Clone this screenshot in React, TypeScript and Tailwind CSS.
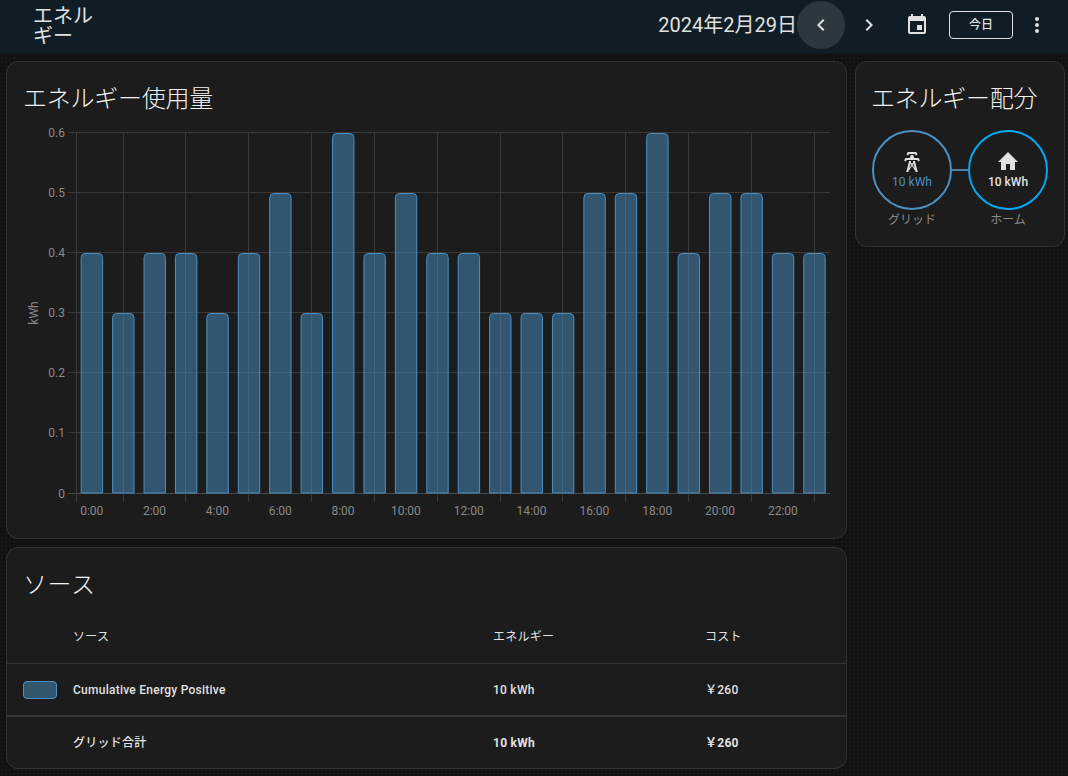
const fontStack = "font-['Roboto','Noto_Sans_CJK_JP',sans-serif]";

const usage = [0.4, 0.3, 0.4, 0.4, 0.3, 0.4, 0.5, 0.3, 0.6, 0.4, 0.5, 0.4, 0.4, 0.3, 0.3, 0.3, 0.5, 0.5, 0.6, 0.4, 0.5, 0.5, 0.4, 0.4];

const plot = { left: 76, right: 830, top: 132.5, bottom: 493 };
const band = (plot.right - plot.left) / 24;
// snapped to the pixel grid so the grid lines stay one pixel wide
const yFor = (v: number) => Math.floor(plot.bottom - (v / 0.6) * (plot.bottom - plot.top)) + 0.5;

const cost = "\uFFE5260";

const icons = {
  left: "M15.41,16.58L10.83,12L15.41,7.41L14,6L8,12L14,18L15.41,16.58Z",
  right: "M8.59,16.58L13.17,12L8.59,7.41L10,6L16,12L10,18L8.59,16.58Z",
  calendar: "M19 19H5V8H19M16 1V3H8V1H6V3H5C3.89 3 3 3.89 3 5V19A2 2 0 0 0 5 21H19A2 2 0 0 0 21 19V5C21 3.89 20.1 3 19 3H18V1M17 12H12V17H17V12Z",
  dots: "M12,16A2,2 0 0,1 14,18A2,2 0 0,1 12,20A2,2 0 0,1 10,18A2,2 0 0,1 12,16M12,10A2,2 0 0,1 14,12A2,2 0 0,1 12,14A2,2 0 0,1 10,12A2,2 0 0,1 12,10M12,4A2,2 0 0,1 14,6A2,2 0 0,1 12,8A2,2 0 0,1 10,6A2,2 0 0,1 12,4Z",
  tower: "M8.28,5.45L6.5,4.55L7.76,2H16.23L17.5,4.55L15.72,5.45L15,4H9L8.28,5.45M18.62,8H14.09L13.3,5H10.7L9.91,8H5.38L4.1,10.55L5.89,11.44L6.62,10H17.38L18.1,11.44L19.89,10.55L18.62,8M17.77,22H15.7L15.46,21.1L12,15.9L8.53,21.1L8.3,22H6.23L9.12,11H11.19L10.83,12.35L12,14.1L13.16,12.35L12.81,11H14.88L17.77,22M11.4,15L10.5,13.65L9.32,18.13L11.4,15M14.68,18.13L13.5,13.65L12.6,15L14.68,18.13Z",
  home: "M10,20V14H14V20H19V12H22L12,2L2,12H5V20H10Z",
};

function Icon({ d, className }: { d: string; className?: string }) {
  return (
    <svg viewBox="0 0 24 24" className={className} fill="currentColor">
      <path d={d} />
    </svg>
  );
}

function UsageChart() {
  const vLines = Array.from({ length: 12 }, (_, i) => Math.floor(plot.left + band * (1.5 + i * 2)) + 0.5);
  const yTicks = [0, 0.1, 0.2, 0.3, 0.4, 0.5, 0.6];

  return (
    <svg viewBox="7 115 839 423" className="block h-[423px] w-[839px]">
      {yTicks.map((t) => (
        <g key={t}>
          <line x1={68} x2={plot.right} y1={yFor(t)} y2={yFor(t)} stroke={t === 0 ? "#4a4a4a" : "#383838"} />
          <text x={65} y={yFor(t) + 4} textAnchor="end" fontSize={12} fill="#8a8a8a">
            {t}
          </text>
        </g>
      ))}
      <line x1={76.5} x2={76.5} y1={plot.top} y2={plot.bottom + 9} stroke="#3d3d3d" />
      {vLines.map((x) => (
        <line key={x} x1={x} x2={x} y1={plot.top} y2={plot.bottom + 9} stroke="#383838" />
      ))}
      {usage.map((v, i) => {
        const x = plot.left + band * i + 5.2;
        const w = 21.4;
        const y = yFor(v) + 1;
        return (
          <path
            key={i}
            d={`M${x} ${plot.bottom}V${y + 4}a4 4 0 0 1 4 -4H${x + w - 4}a4 4 0 0 1 4 4V${plot.bottom}Z`}
            fill="#4a90c4"
            fillOpacity={0.5}
            stroke="#4a90c4"
            strokeWidth={1}
          />
        );
      })}
      {usage.map((_, i) =>
        i % 2 === 0 ? (
          <text key={i} x={plot.left + band * (i + 0.5)} y={515} textAnchor="middle" fontSize={12} fill="#8a8a8a">
            {i}:00
          </text>
        ) : null
      )}
      <text transform="translate(38 313) rotate(-90)" textAnchor="middle" fontSize={12} fill="#8a8a8a">
        kWh
      </text>
    </svg>
  );
}

function Card({ className, children }: { className?: string; children: React.ReactNode }) {
  return <section className={`rounded-xl border border-[#333333] bg-[#1c1c1c] ${className ?? ""}`}>{children}</section>;
}

function CardTitle({ className, children }: { className?: string; children: React.ReactNode }) {
  return <h2 className={`px-4 pt-[21px] text-2xl leading-8 font-light text-[#f0f0f0] ${className ?? ""}`}>{children}</h2>;
}

function SourceRow({ name, energy, cost, swatch, bold, className }: { name: string; energy: string; cost: string; swatch?: boolean; bold?: boolean; className: string }) {
  return (
    <div className={`flex items-center text-xs font-medium tracking-[0.25px] text-[#e1e1e1] ${className}`}>
      <div className="w-[66px] pl-4">
        {swatch && <div className="h-[18px] w-[34px] rounded-[4px] border border-[#4a90c4] bg-[#33566f]" />}
      </div>
      <div className="w-[420px]">{name}</div>
      <div className={`w-[212px] ${bold ? "font-bold" : ""}`}>{energy}</div>
      <div className={bold ? "font-bold" : ""}>{cost}</div>
    </div>
  );
}

export default function App() {
  return (
    <div className={`flex h-[776px] w-[1068px] flex-col overflow-hidden bg-[#111111] bg-[radial-gradient(#181818_1px,transparent_1px)] bg-[length:4px_4px] ${fontStack}`}>
      <header className="flex h-[53px] flex-none items-center bg-[#101d24] pr-[7px] pb-[3px] text-[#e1e1e1]">
        <div className="mt-[2px] ml-[33px] w-[60px] text-xl leading-5">エネルギー</div>
        <div className="ml-auto text-xl whitespace-nowrap">2024年2月29日</div>
        <button className="flex h-12 w-12 items-center justify-center rounded-full bg-[#2b393f]">
          <Icon d={icons.left} className="h-6 w-6" />
        </button>
        <button className="flex h-12 w-12 items-center justify-center">
          <Icon d={icons.right} className="h-6 w-6" />
        </button>
        <button className="flex h-12 w-12 items-center justify-center">
          <Icon d={icons.calendar} className="h-6 w-6" />
        </button>
        <button className="ml-2 h-7 w-16 rounded border border-[#e1e1e1] text-xs font-medium">今日</button>
        <button className="flex h-12 w-12 items-center justify-center">
          <Icon d={icons.dots} className="h-6 w-6" />
        </button>
      </header>

      <main className="flex gap-2 pt-2 pl-[6px]">
        <div className="flex w-[841px] flex-col gap-2">
          <Card className="h-[478px]">
            <CardTitle className="tracking-[-0.25px]">エネルギー使用量</CardTitle>
            <UsageChart />
          </Card>
          <Card className="h-[222px]">
            <CardTitle className="tracking-[0.6px]">ソース</CardTitle>
            <div className="flex h-[62px] items-center pt-[10px] text-xs tracking-[0.25px] text-[#e1e1e1]">
              <div className="w-[66px]" />
              <div className="w-[420px]">ソース</div>
              <div className="w-[212px]">エネルギー</div>
              <div>コスト</div>
            </div>
            <SourceRow name="Cumulative Energy Positive" energy="10 kWh" cost={cost} swatch className="h-[52px] border-t border-[#333333]" />
            <SourceRow name="グリッド合計" energy="10 kWh" cost={cost} bold className="h-[53px] border-t-2 border-[#333333] pt-[1px]" />
          </Card>
        </div>

        <Card className="h-[186px] w-[210px] flex-none">
          <CardTitle className="-ml-px tracking-[-0.25px] whitespace-nowrap">エネルギー配分</CardTitle>
          <div className="mt-[15px] flex items-center px-4">
            <div className="flex h-20 w-20 flex-col items-center justify-center rounded-full border-2 border-[#4a90c4]">
              <Icon d={icons.tower} className="h-6 w-6 text-[#e1e1e1]" />
              <span className="text-xs leading-4 text-[#4a90c4]">10 kWh</span>
            </div>
            <div className="h-0.5 w-4 bg-[#4a7fa8]" />
            <div className="flex h-20 w-20 flex-col items-center justify-center rounded-full border-2 border-[#03a9f4]">
              <Icon d={icons.home} className="h-6 w-6 text-[#e1e1e1]" />
              <span className="text-xs leading-4 font-medium text-[#e1e1e1]">10 kWh</span>
            </div>
          </div>
          <div className="mt-[2px] flex justify-between px-4 text-xs leading-4 text-[#8a8a8a]">
            <span className="w-20 text-center">グリッド</span>
            <span className="w-20 text-center">ホーム</span>
          </div>
        </Card>
      </main>
    </div>
  );
}
